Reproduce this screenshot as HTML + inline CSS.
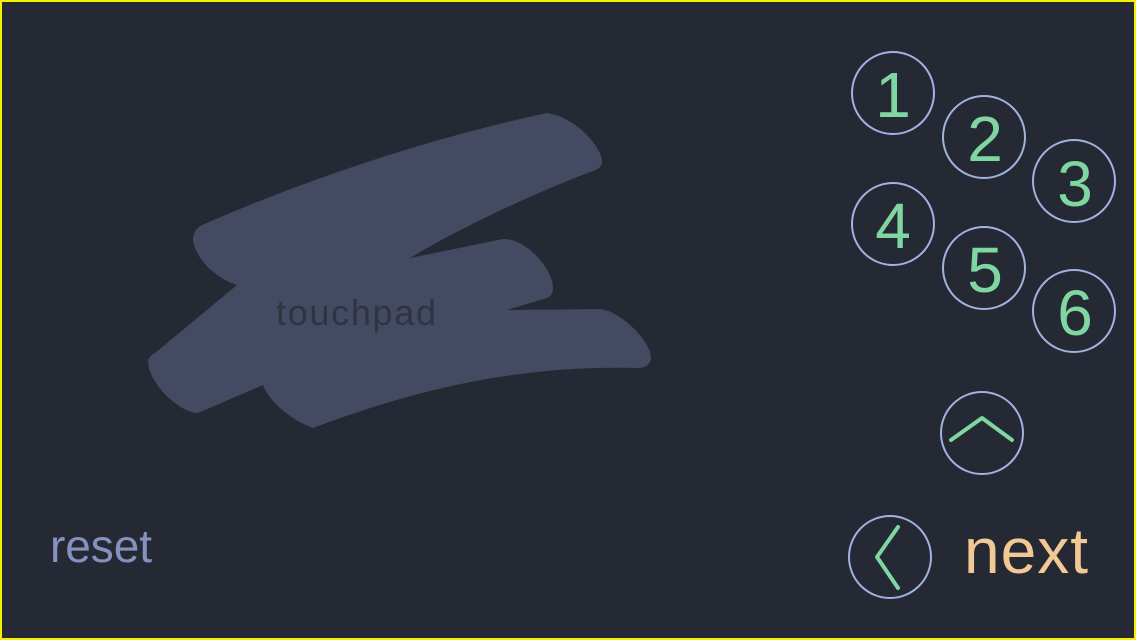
<!DOCTYPE html>
<html><head><meta charset="utf-8"><style>
html,body{margin:0;padding:0;}
body{width:1136px;height:640px;overflow:hidden;background:#242933;}
svg{display:block}
text{font-family:"Liberation Sans",sans-serif;}
</style></head><body>
<svg width="1136" height="640" viewBox="0 0 1136 640">
<rect x="1" y="1" width="1134" height="638" fill="#242933" stroke="#f5f000" stroke-width="2"/>
<path fill="#434a61" d="M547,113 C575,117 600,145 602,160 C603,167 597,170 590,172 C530,195 460,228 410,258 L503,239 C525,238 553,268 553,288 C553,294 550,297 547,298 L507,310 L600,309 C620,311 650,340 651,357 C651,364 646,368 638,368 C520,365 420,388 313,428 C290,420 268,400 263,385 L198,413 C180,413 150,385 148,363 C148,358 151,355 155,353 L237,285 C215,278 195,258 193,240 C193,232 197,228 202,225 C310,178 430,138 547,113 Z"/>
<text x="276" y="325" font-size="36" fill="#2f3443" textLength="160">touchpad</text>
<text x="50" y="562" font-size="46" fill="#8791c0" textLength="102">reset</text>
<g fill="none" stroke="#a3b1e0" stroke-width="2">
<circle cx="893" cy="93" r="41"/><circle cx="984" cy="137" r="41"/><circle cx="1074" cy="181" r="41"/>
<circle cx="893" cy="224" r="41"/><circle cx="984" cy="268" r="41"/><circle cx="1074" cy="311" r="41"/>
<circle cx="982" cy="433" r="41"/><circle cx="890" cy="557" r="41"/>
</g>
<g fill="#7fd6a0" font-size="64" text-anchor="middle">
<text x="893" y="117">1</text><text x="985" y="161">2</text><text x="1075" y="206">3</text>
<text x="893" y="248">4</text><text x="985" y="292">5</text><text x="1075" y="335">6</text>
</g>
<g fill="none" stroke="#7fd6a0" stroke-width="4" stroke-linecap="round" stroke-linejoin="round">
<path d="M951,440 L982,418 L1012,440"/>
<path d="M898,527 L877,557 L898,588"/>
</g>
<text x="964" y="573" font-size="64" fill="#f2c894" textLength="124" lengthAdjust="spacing">next</text>
</svg>
</body></html>
